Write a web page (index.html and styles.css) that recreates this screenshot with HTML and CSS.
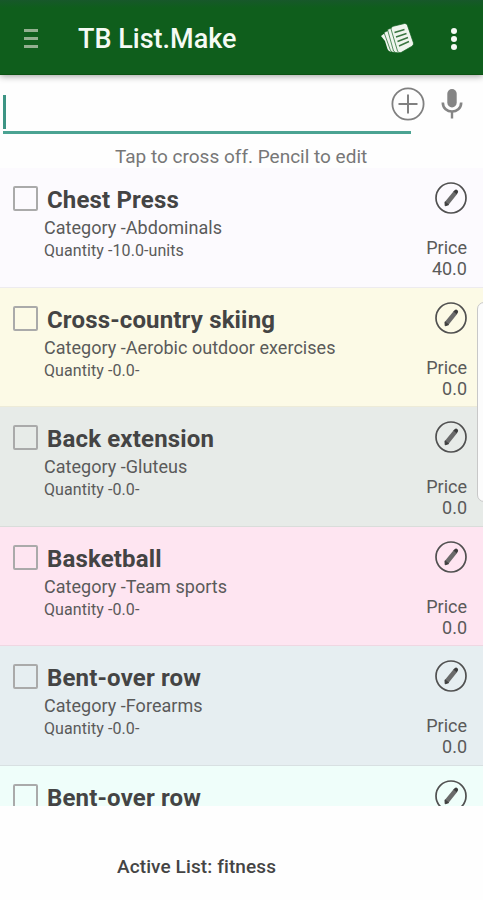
FILE: index.html
```
<!DOCTYPE html>
<html lang="en">
<head>
    <meta charset="UTF-8">
    <meta name="viewport" content="width=device-width, initial-scale=1.0">
    <title>TB List.Make</title>
    <link rel="stylesheet" href="styles.css">
</head>
<body>
    <svg class="symbols">
        <symbol id="pencil" viewBox="0 0 34 34">
            <circle cx="17" cy="17" r="15" fill="none" stroke="#505050" stroke-width="1.7"/>
            <path d="M12.8 22.2L21.6 11.4" stroke="#6a6a6a" stroke-width="4.6"/>
            <path d="M11 20.8L14.6 23.7L11.2 24.8Z" fill="#3c3c3c" stroke="#3c3c3c" stroke-width="1"/>
            <path d="M19.4 10.6L20.9 8.9Q22.2 8.1 23.5 9.2Q24.6 10.4 23.8 11.7L22.7 13.2Z" fill="#3c3c3c"/>
        </symbol>
    </svg>
    <div class="header">
        <div class="menu"><span></span><span></span><span></span></div>
        <h1>TB List.Make</h1>
        <svg class="lists-icon" width="34" height="32" viewBox="0 0 34 32">
            <path d="M0 13L4 10L12 28.5Q7.5 29 6.5 26L4 18Z" fill="#f0f5ee"/>
            <path d="M3 9.5L8 7L15 29.5Q11 30 9.5 27.5Z" fill="#f0f5ee" stroke="#0f5e1c" stroke-width=".7"/>
            <path d="M6.5 6.5L11.5 4.5L18 30Q14 30 12.5 28Z" fill="#f0f5ee" stroke="#0f5e1c" stroke-width=".7"/>
            <path d="M10 6Q10.2 4 12 3.3L23.5 .5Q25.5 .2 26.3 2L32.5 20Q32.8 22 31 23.2L20 29.6Q17.5 30.5 16.5 28Z" fill="#f0f5ee" stroke="#0f5e1c" stroke-width=".7"/>
            <path d="M13.5 9.5L23.5 6.5M15 14L25.5 10.5M16.5 18.5L27 14.5M18 23L28 18.5" stroke="#39743f" stroke-width="1.4"/>
        </svg>
        <div class="more"><span></span><span></span><span></span></div>
    </div>
    <div class="entry">
        <div class="entry-field"><span class="caret"></span></div>
        <svg class="add-icon" width="34" height="34" viewBox="0 0 34 34" fill="none" stroke="#808080">
            <circle cx="17" cy="17" r="15.6" stroke-width="1.8"/>
            <path d="M17 7.5V26.5M7.5 17H26.5" stroke-width="2"/>
        </svg>
        <svg class="mic-icon" width="22" height="32" viewBox="0 0 22 32">
            <rect x="6.3" y="1" width="9.4" height="18.5" rx="4.7" fill="#858585"/>
            <path d="M1.8 14.5C1.8 26.5 20.2 26.5 20.2 14.5" fill="none" stroke="#858585" stroke-width="2.6"/>
            <path d="M11 23V30.5" stroke="#858585" stroke-width="2.4"/>
        </svg>
    </div>
    <p class="hint">Tap to cross off. Pencil to edit</p>
    <div class="list">
        <div class="item lavender">
            <span class="checkbox"></span>
            <div class="details">
                <h2>Chest Press</h2>
                <p class="category">Category -Abdominals</p>
                <p class="quantity">Quantity -10.0-units</p>
            </div>
            <div class="side">
                <svg class="pencil"><use href="#pencil"/></svg>
                <p>Price</p>
                <p>40.0</p>
            </div>
        </div>
        <div class="item yellow">
            <span class="checkbox"></span>
            <div class="details">
                <h2>Cross-country skiing</h2>
                <p class="category">Category -Aerobic outdoor exercises</p>
                <p class="quantity">Quantity -0.0-</p>
            </div>
            <div class="side">
                <svg class="pencil"><use href="#pencil"/></svg>
                <p>Price</p>
                <p>0.0</p>
            </div>
        </div>
        <div class="item gray">
            <span class="checkbox"></span>
            <div class="details">
                <h2>Back extension</h2>
                <p class="category">Category -Gluteus</p>
                <p class="quantity">Quantity -0.0-</p>
            </div>
            <div class="side">
                <svg class="pencil"><use href="#pencil"/></svg>
                <p>Price</p>
                <p>0.0</p>
            </div>
        </div>
        <div class="item pink">
            <span class="checkbox"></span>
            <div class="details">
                <h2>Basketball</h2>
                <p class="category">Category -Team sports</p>
                <p class="quantity">Quantity -0.0-</p>
            </div>
            <div class="side">
                <svg class="pencil"><use href="#pencil"/></svg>
                <p>Price</p>
                <p>0.0</p>
            </div>
        </div>
        <div class="item blue">
            <span class="checkbox"></span>
            <div class="details">
                <h2>Bent-over row</h2>
                <p class="category">Category -Forearms</p>
                <p class="quantity">Quantity -0.0-</p>
            </div>
            <div class="side">
                <svg class="pencil"><use href="#pencil"/></svg>
                <p>Price</p>
                <p>0.0</p>
            </div>
        </div>
        <div class="item mint">
            <span class="checkbox"></span>
            <div class="details">
                <h2>Bent-over row</h2>
            </div>
            <div class="side">
                <svg class="pencil"><use href="#pencil"/></svg>
            </div>
        </div>
        <div class="edge-panel"></div>
    </div>
    <div class="footer">
        <p>Active List: fitness</p>
    </div>
</body>
</html>
```
FILE: styles.css
```
body {
    margin: 0;
    font-family: Roboto, 'Liberation Sans', sans-serif;
    background-color: #fefefe;
    color: #5a5a5a;
    display: flex;
    flex-direction: column;
    height: 900px;
    overflow: hidden;
}
h1, h2, p {
    margin: 0;
    white-space: nowrap;
}
.symbols {
    display: none;
}
.header {
    display: flex;
    align-items: center;
    box-sizing: border-box;
    height: 75px;
    flex-shrink: 0;
    padding: 3px 24px 0 24px;
    background: linear-gradient(#17582a, #0f5e1c 8px);
    border-bottom: 1px solid #0b5212;
    box-shadow: 0 1px 7px rgba(0, 0, 0, 0.4);
    color: #f5faf4;
}
.menu {
    display: flex;
    flex-direction: column;
    gap: 5px;
    margin-right: 40px;
}
.menu span {
    width: 14px;
    height: 3px;
    background-color: #93b090;
}
.header h1 {
    flex: 1;
    font-size: 27px;
    font-weight: 500;
    line-height: 32px;
}
.lists-icon {
    margin-right: 36px;
}
.more {
    display: flex;
    flex-direction: column;
    gap: 2px;
    margin-right: 2px;
}
.more span {
    width: 6px;
    height: 6px;
    border-radius: 50%;
    background-color: #f5faf4;
}
.entry {
    display: flex;
    height: 59px;
    flex-shrink: 0;
}
.entry-field {
    box-sizing: border-box;
    width: 408px;
    margin-left: 3px;
    margin-right: -20px;
    padding-top: 20px;
    border-bottom: 3px solid #4ba392;
}
.caret {
    display: block;
    width: 3px;
    height: 34px;
    background-color: #3d9484;
}
.add-icon {
    margin-top: 12px;
}
.mic-icon {
    margin-top: 13px;
    margin-left: 16px;
}
.hint {
    height: 34px;
    flex-shrink: 0;
    padding-left: 115px;
    font-size: 19px;
    line-height: 46px;
    color: #777;
}
.list {
    position: relative;
    height: 638px;
    flex-shrink: 0;
    overflow: hidden;
}
.item {
    display: flex;
    box-sizing: border-box;
    height: 119.6px;
    padding: 18px 16px 0 13px;
    border-bottom: 1px solid rgba(0, 0, 0, 0.06);
}
.lavender {
    background-color: #fcfafe;
}
.yellow {
    background-color: #fcfae6;
}
.gray {
    background-color: #e7ebe8;
}
.pink {
    background-color: #fee5f1;
}
.blue {
    background-color: #e6eef1;
}
.mint {
    background-color: #effefa;
}
.checkbox {
    box-sizing: border-box;
    width: 25px;
    height: 25px;
    border: 2px solid #aaa;
    border-radius: 2px;
}
.details {
    flex: 1;
    padding-left: 6px;
}
.details h2 {
    padding-left: 3px;
    font-size: 24px;
    font-weight: 700;
    line-height: 28px;
    letter-spacing: 0.16px;
    color: #444;
}
.category {
    margin-top: 2px;
    font-size: 18px;
    line-height: 24px;
    letter-spacing: 0.03px;
}
.quantity {
    font-size: 16px;
    line-height: 21px;
    letter-spacing: 0.08px;
}
.side {
    display: flex;
    flex-direction: column;
    align-items: flex-end;
    font-size: 18px;
    line-height: 21px;
}
.pencil {
    width: 34px;
    height: 34px;
    margin: -5px -1px 22px 0;
}
.edge-panel {
    position: absolute;
    top: 134px;
    right: -9px;
    width: 13px;
    height: 198px;
    background-color: #fcfcfc;
    border: 1px solid #c8c8c8;
    border-radius: 7px;
}
.footer {
    padding-left: 117px;
    font-size: 19px;
    font-weight: 500;
    line-height: 121px;
    letter-spacing: 0.1px;
    color: #444;
}
```
